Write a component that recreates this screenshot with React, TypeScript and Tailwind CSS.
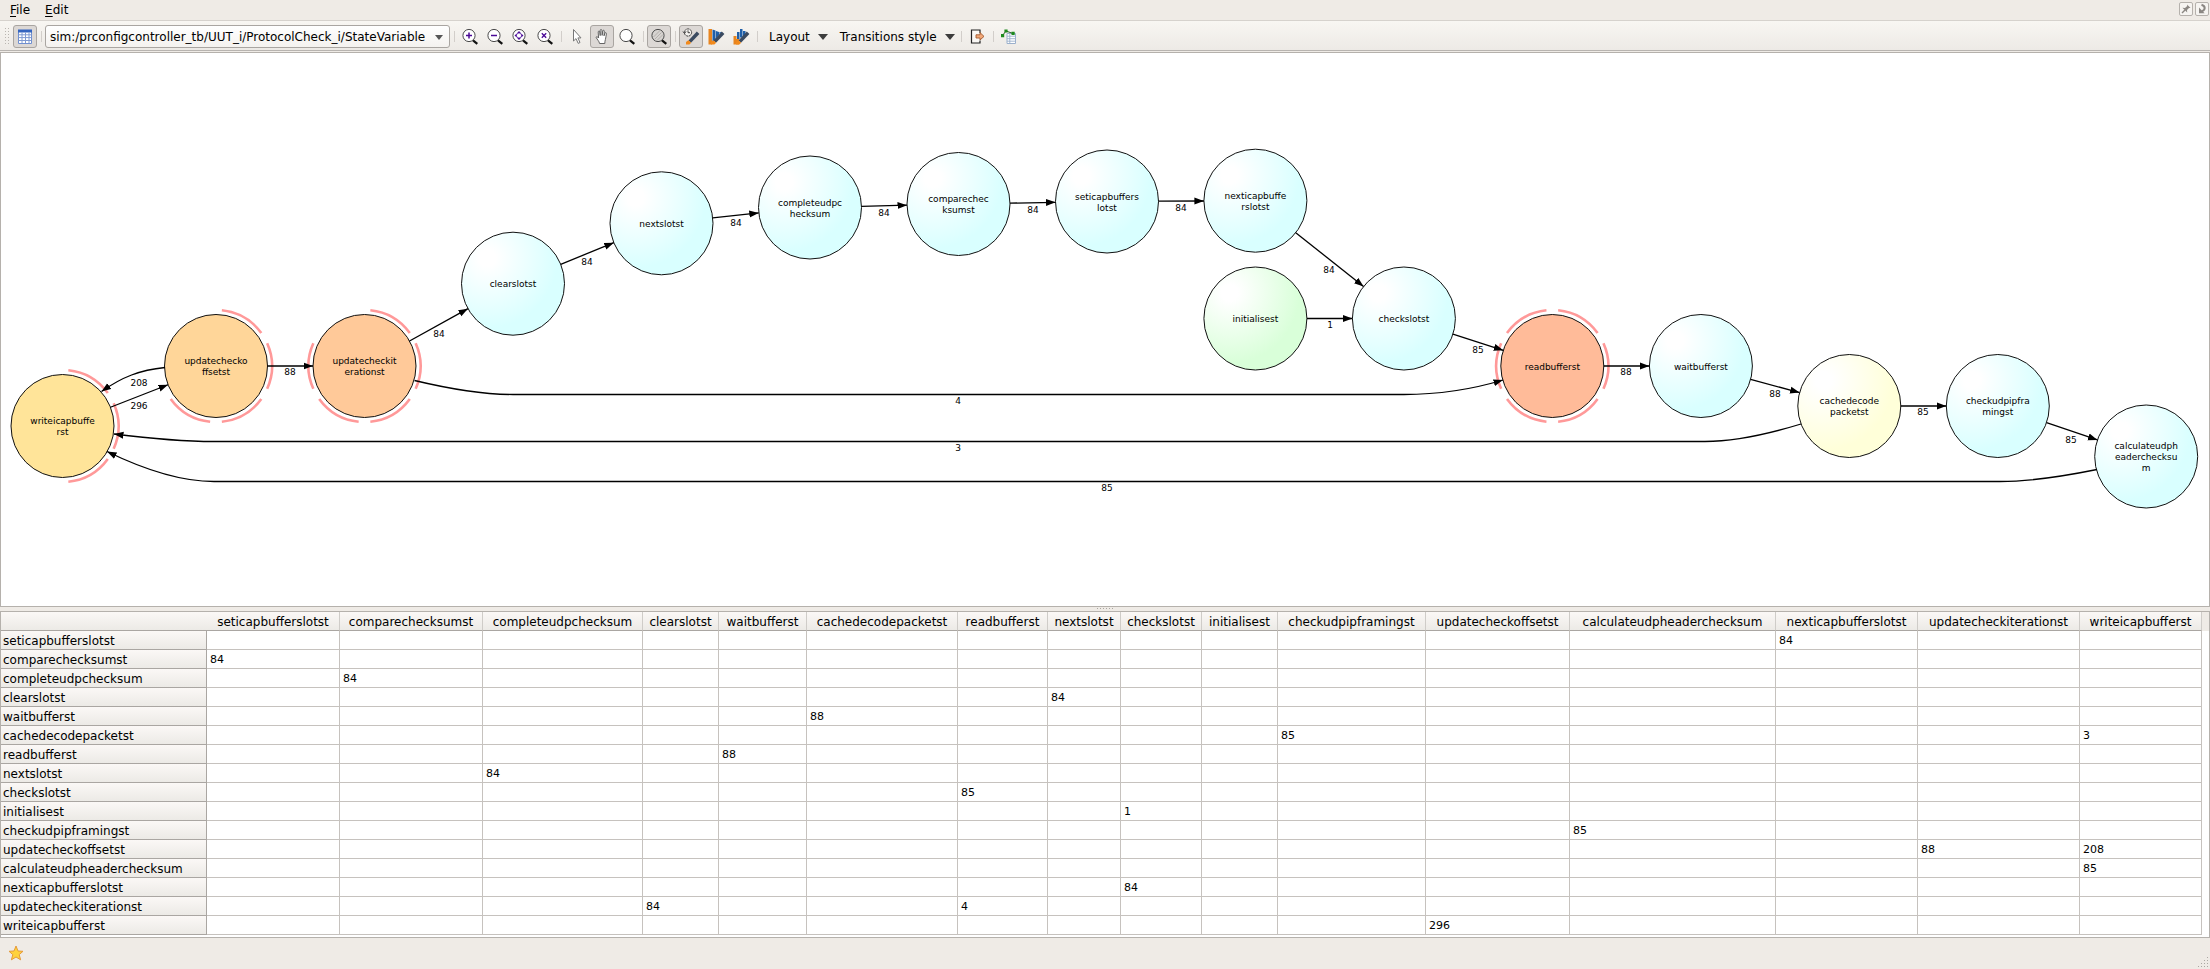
import React, { useState } from "react";

type StateNode = {
  id: string;
  x: number;
  y: number;
  lines: string[];
  fill: string;
  arcs?: number[];
};

const RADIUS = 51.5;
const CYAN = "url(#cyan)";

const NODES: StateNode[] = [
  { id: "write", x: 62.5, y: 426, lines: ["writeicapbuffe", "rst"], fill: "#ffe499", arcs: [0, 1, 2] },
  { id: "offset", x: 216, y: 366, lines: ["updatechecko", "ffsetst"], fill: "#ffd699", arcs: [0, 1, 2, 3] },
  { id: "iteration", x: 364.5, y: 366, lines: ["updatecheckit", "erationst"], fill: "#ffc999", arcs: [0, 1, 2, 3, 4] },
  { id: "clear", x: 513, y: 283.7, lines: ["clearslotst"], fill: CYAN },
  { id: "next", x: 661.5, y: 223.3, lines: ["nextslotst"], fill: CYAN },
  { id: "complete", x: 810, y: 207.5, lines: ["completeudpc", "hecksum"], fill: CYAN },
  { id: "compare", x: 958.5, y: 204, lines: ["comparechec", "ksumst"], fill: CYAN },
  { id: "seticap", x: 1107, y: 201.5, lines: ["seticapbuffers", "lotst"], fill: CYAN },
  { id: "nexticap", x: 1255.4, y: 200.7, lines: ["nexticapbuffe", "rslotst"], fill: CYAN },
  { id: "initialise", x: 1255.4, y: 318.5, lines: ["initialisest"], fill: "url(#green)" },
  { id: "check", x: 1403.9, y: 318.5, lines: ["checkslotst"], fill: CYAN },
  { id: "read", x: 1552.3, y: 366, lines: ["readbufferst"], fill: "#ffbb99", arcs: [0, 1, 2, 3, 4, 5] },
  { id: "wait", x: 1700.9, y: 366, lines: ["waitbufferst"], fill: CYAN },
  { id: "cached", x: 1849.3, y: 406, lines: ["cachedecode", "packetst"], fill: "url(#yellow)" },
  { id: "checkudp", x: 1997.8, y: 406, lines: ["checkudpipfra", "mingst"], fill: CYAN },
  { id: "calculate", x: 2146.2, y: 456.5, lines: ["calculateudph", "eaderchecksu", "m"], fill: CYAN },
];

const STRAIGHT: [string, string][] = [
  ["write", "offset"],
  ["offset", "iteration"],
  ["iteration", "clear"],
  ["clear", "next"],
  ["next", "complete"],
  ["complete", "compare"],
  ["compare", "seticap"],
  ["seticap", "nexticap"],
  ["nexticap", "check"],
  ["initialise", "check"],
  ["check", "read"],
  ["read", "wait"],
  ["wait", "cached"],
  ["cached", "checkudp"],
  ["checkudp", "calculate"],
];

const CURVES = [
  "M165 367.5 C140 370 122 377 101.5 391.5",
  "M414.5 380.5 C450 389 485 394.5 513 394.5 H1404 C1435 394.5 1470 390 1503 380",
  "M1801 424 C1765 435 1735 441.5 1705 441.5 H214 C180 441.5 150 438.5 114 434",
  "M2097 469.5 C2060 477 2030 481.5 2000 481.5 H214 C180 481.5 145 470 107 451.5",
];

const EDGE_LABELS: [number, number, string][] = [
  [139, 383, "208"],
  [139, 406, "296"],
  [290, 372, "88"],
  [439, 334, "84"],
  [587, 262, "84"],
  [736, 223, "84"],
  [884, 213, "84"],
  [1033, 210, "84"],
  [1181, 208, "84"],
  [1329, 270, "84"],
  [1330, 325, "1"],
  [1478, 350, "85"],
  [1626, 372, "88"],
  [1775, 394, "88"],
  [1923, 412, "85"],
  [2071, 440, "85"],
  [958, 401, "4"],
  [958, 448, "3"],
  [1107, 488, "85"],
];

const COLUMNS = [
  { name: "seticapbufferslotst", width: "w-[133px]" },
  { name: "comparechecksumst", width: "w-[143px]" },
  { name: "completeudpchecksum", width: "w-[160px]" },
  { name: "clearslotst", width: "w-[76px]" },
  { name: "waitbufferst", width: "w-[88px]" },
  { name: "cachedecodepacketst", width: "w-[151px]" },
  { name: "readbufferst", width: "w-[90px]" },
  { name: "nextslotst", width: "w-[73px]" },
  { name: "checkslotst", width: "w-[81px]" },
  { name: "initialisest", width: "w-[76px]" },
  { name: "checkudpipframingst", width: "w-[148px]" },
  { name: "updatecheckoffsetst", width: "w-[144px]" },
  { name: "calculateudpheaderchecksum", width: "w-[206px]" },
  { name: "nexticapbufferslotst", width: "w-[142px]" },
  { name: "updatecheckiterationst", width: "w-[162px]" },
  { name: "writeicapbufferst", width: "w-[122px]" },
];

const COUNTS: Record<string, Record<string, number>> = {
  seticapbufferslotst: { nexticapbufferslotst: 84 },
  comparechecksumst: { seticapbufferslotst: 84 },
  completeudpchecksum: { comparechecksumst: 84 },
  clearslotst: { nextslotst: 84 },
  waitbufferst: { cachedecodepacketst: 88 },
  cachedecodepacketst: { checkudpipframingst: 85, writeicapbufferst: 3 },
  readbufferst: { waitbufferst: 88 },
  nextslotst: { completeudpchecksum: 84 },
  checkslotst: { readbufferst: 85 },
  initialisest: { checkslotst: 1 },
  checkudpipframingst: { calculateudpheaderchecksum: 85 },
  updatecheckoffsetst: { updatecheckiterationst: 88, writeicapbufferst: 208 },
  calculateudpheaderchecksum: { writeicapbufferst: 85 },
  nexticapbufferslotst: { checkslotst: 84 },
  updatecheckiterationst: { clearslotst: 84, readbufferst: 4 },
  writeicapbufferst: { updatecheckoffsetst: 296 },
};

/* Arc of a 60 degree wedge, 6 degrees short at each end, clockwise from the top. */
function arcPath(x: number, y: number, wedge: number) {
  const r = 56;
  const a = ((wedge * 60 + 6) * Math.PI) / 180;
  const b = ((wedge * 60 + 54) * Math.PI) / 180;
  return `M${x + r * Math.sin(a)} ${y - r * Math.cos(a)} A${r} ${r} 0 0 1 ${x + r * Math.sin(b)} ${y - r * Math.cos(b)}`;
}

function straightPath(fromId: string, toId: string) {
  const a = NODES.find((n) => n.id === fromId)!;
  const b = NODES.find((n) => n.id === toId)!;
  const d = Math.hypot(b.x - a.x, b.y - a.y);
  const ux = ((b.x - a.x) / d) * RADIUS;
  const uy = ((b.y - a.y) / d) * RADIUS;
  return `M${a.x + ux} ${a.y + uy} L${b.x - ux} ${b.y - uy}`;
}

function Gradient({ id, color }: { id: string; color: string }) {
  return (
    <radialGradient id={id} cx="0.25" cy="0.25" r="0.68">
      <stop offset="0" stopColor="#ffffff" />
      <stop offset="0.12" stopColor="#ffffff" />
      <stop offset="1" stopColor={color} />
    </radialGradient>
  );
}

function Diagram() {
  const edges = [...STRAIGHT.map(([a, b]) => straightPath(a, b)), ...CURVES];
  return (
    <svg className="block h-full w-full font-['DejaVu_Sans',sans-serif] text-[9px]" role="img" aria-label="State diagram">
      <defs>
        <Gradient id="cyan" color="#d9ffff" />
        <Gradient id="green" color="#d9ffd9" />
        <Gradient id="yellow" color="#ffffd9" />
        <marker id="arrow" markerUnits="userSpaceOnUse" markerWidth="10" markerHeight="8" refX="9.5" refY="4" orient="auto">
          <path d="M0 0.5 L9.5 4 L0 7.5 Z" fill="#000" />
        </marker>
      </defs>
      <g transform="translate(-1 -53)">
        {NODES.map((n) => (
          <g key={n.id}>
            {n.arcs?.map((w) => (
              <path key={w} d={arcPath(n.x, n.y, w)} fill="none" stroke="#ff9999" strokeWidth="2.6" />
            ))}
            <circle cx={n.x} cy={n.y} r={RADIUS} fill={n.fill} stroke="#111" strokeWidth="1" />
            {n.lines.map((line, i) => (
              <text key={i} x={n.x} y={Math.round(n.y + 3.5 + (i - (n.lines.length - 1) / 2) * 11)} textAnchor="middle">
                {line}
              </text>
            ))}
          </g>
        ))}
        {edges.map((d) => (
          <path key={d} d={d} fill="none" stroke="#000" strokeWidth="1.3" markerEnd="url(#arrow)" />
        ))}
        {EDGE_LABELS.map(([x, y, text]) => (
          <text key={`${x}-${y}`} x={x} y={y + 3} textAnchor="middle">
            {text}
          </text>
        ))}
      </g>
    </svg>
  );
}

function ToolButton({ label, pressed, children }: { label: string; pressed?: boolean; children: React.ReactNode }) {
  return (
    <button
      type="button"
      aria-label={label}
      aria-pressed={pressed}
      className={
        pressed
          ? "h-[23px] w-6 shrink-0 rounded-[3px] border border-[#a9a5a1] bg-[#dcd8d5]"
          : "h-[23px] w-6 shrink-0 rounded-[3px] border border-transparent"
      }
    >
      <svg viewBox="1 1 22 21" className="block h-full w-full" fill="none">
        {children}
      </svg>
    </button>
  );
}

function Divider() {
  return <div className="mr-[3px] ml-1 h-[11px] w-px shrink-0 bg-[#d2ceca]" />;
}

function Lens({ children, fill = "#ffffff" }: { children?: React.ReactNode; fill?: string }) {
  return (
    <>
      <path d="M15 15.3 L19.3 18.8" stroke="#111" strokeWidth="2.2" />
      <circle cx="11" cy="10.5" r="6.1" fill={fill} stroke="#4a4a4a" strokeWidth="1" />
      {children}
    </>
  );
}

function Pencil() {
  return (
    <>
      <path d="M9.5 15.5 L17.8 6.6 L20.4 9 L12 17.8 Z" fill="#3a4a60" />
      <path d="M9.3 15.2 L12.2 17.8 L10.4 19.6 H7 V17 Z" fill="#f28a1c" />
    </>
  );
}

function MenuTrigger({ children }: { children: React.ReactNode }) {
  return (
    <button type="button" className="flex h-[23px] shrink-0 items-center gap-2 whitespace-nowrap">
      {children}
      <svg viewBox="0 0 10 6" className="h-[6px] w-[10px]">
        <path d="M0 0 H10 L5 6 Z" fill="#3d3d3d" />
      </svg>
    </button>
  );
}

function Toolbar() {
  const [path, setPath] = useState("sim:/prconfigcontroller_tb/UUT_i/ProtocolCheck_i/StateVariable");
  return (
    <div className="flex h-[30px] shrink-0 items-center border-b border-[#b8b4b0] bg-linear-to-b from-[#f8f6f2] to-[#edeae6] pt-[2px] pl-1">
      <svg viewBox="0 0 6 17" className="mr-[3px] h-[17px] w-[6px] shrink-0">
        {[0, 1, 2, 3, 4, 5].map((i) => (
          <path key={i} d={`M1 ${i * 3} h1 v1 h-1 Z M4 ${i * 3} h1 v1 h-1 Z`} fill="#b9b5b0" />
        ))}
      </svg>
      <ToolButton label="Show table" pressed>
        <path d="M5.5 5.5 H18.5 V18.5 H5.5 Z" fill="#ffffff" stroke="#6f8fd0" />
        <path d="M5 4.5 H19 V7.5 H5 Z" fill="#3465c0" />
        <path d="M5.5 9.8 H18.5 M5.5 12.6 H18.5 M5.5 15.5 H18.5 M9 7.5 V18 M12.5 7.5 V18 M16 7.5 V18" stroke="#7f9ad2" />
      </ToolButton>
      <Divider />
      <div className="relative shrink-0">
        <select
          aria-label="State variable"
          value={path}
          onChange={(e) => setPath(e.target.value)}
          className="block h-[23px] w-[405px] appearance-none rounded-[3px] border border-[#a9a5a1] bg-linear-to-b from-white to-[#f4f2ef] pr-6 pl-1 text-[12px] text-black"
        >
          <option>{path}</option>
        </select>
        <svg viewBox="0 0 8 5" className="pointer-events-none absolute top-[10px] right-[7px] h-[5px] w-[8px]">
          <path d="M0 0 H8 L4 5 Z" fill="#555" />
        </svg>
      </div>
      <Divider />
      <div className="flex gap-px">
        <ToolButton label="Zoom in">
          <Lens>
            <path d="M8 10.5 H14 M11 7.5 V13.5" stroke="#4b0a96" strokeWidth="1.5" />
          </Lens>
        </ToolButton>
        <ToolButton label="Zoom out">
          <Lens>
            <path d="M8 10.5 H14" stroke="#4b0a96" strokeWidth="1.5" />
          </Lens>
        </ToolButton>
        <ToolButton label="Zoom to fit">
          <Lens>
            <circle cx="11" cy="10.5" r="2.6" stroke="#6a35b0" strokeWidth="1" />
            <path d="M11 6 L12.8 8 H9.2 Z M11 15 L12.8 13 H9.2 Z M6.5 10.5 L8.5 8.7 V12.3 Z M15.5 10.5 L13.5 8.7 V12.3 Z" fill="#4b0a96" />
          </Lens>
        </ToolButton>
        <ToolButton label="Reset zoom">
          <Lens>
            <path d="M8.8 8.2 L13.2 12.8 M13.2 8.2 L8.8 12.8" stroke="#4b0a96" strokeWidth="1.3" />
          </Lens>
        </ToolButton>
      </div>
      <Divider />
      <div className="flex gap-px">
        <ToolButton label="Select">
          <path d="M8.5 4.5 V16 L11 13.6 L13.2 18.4 L15 17.5 L12.9 12.9 H16 Z" fill="#fff" stroke="#777" strokeWidth="1" />
        </ToolButton>
        <ToolButton label="Pan" pressed>
          <path
            d="M9.6 18.5 C9 16 7.2 14.5 6.2 12.6 C6 11.4 7.3 11.4 8.6 13 L8.2 7 C8.2 5.8 9.7 5.8 9.8 7 L10.2 10.6 V5.4 C10.2 4.2 11.8 4.2 11.9 5.4 L12.1 10.4 L12.8 6 C13 4.9 14.4 5.1 14.3 6.2 L14 10.8 L15 8.2 C15.5 7.1 16.7 7.6 16.4 8.7 C15.9 11 16 12.5 15.4 14.5 C15 16 14.8 17 14.8 18.5 Z"
            fill="#fff"
            stroke="#555"
            strokeWidth="0.9"
          />
        </ToolButton>
        <ToolButton label="Zoom tool">
          <Lens />
        </ToolButton>
      </div>
      <Divider />
      <ToolButton label="Zoom area" pressed>
        <Lens fill="#d6d3d0">
          <path d="M6.5 12 L12.5 6 M8 14 L14.5 7.5 M10 15.5 L16 9.5" stroke="#aaa6a2" strokeWidth="0.8" />
        </Lens>
      </ToolButton>
      <Divider />
      <div className="flex gap-px">
        <ToolButton label="Highlight by time" pressed>
          <circle cx="9" cy="7.5" r="3.6" fill="#f4f2ef" stroke="#333" strokeWidth="1" strokeDasharray="2 0.6" />
          <path d="M9 5.3 V7.7 H11 M4 6.5 L5.6 8.6 L7 6.3" stroke="#333" strokeWidth="0.9" />
          <Pencil />
        </ToolButton>
        <ToolButton label="Highlight by count">
          <path d="M4.5 4 H8 V19.5 H4.5 Z" fill="#e8851f" />
          <path d="M8.5 4.5 L11.5 5.5 V15 L8.5 18 Z M12 6 L15 7 V10 L12 13.5 Z M15.5 7 L18 7.5 L15.5 9 Z" fill="#1f5fa8" />
          <Pencil />
        </ToolButton>
        <ToolButton label="Highlight by duration">
          <path d="M4.5 11 H7.5 V19.5 H4.5 Z M7.5 14 H10 V19.5 H7.5 Z" fill="#e8851f" />
          <path d="M8 7 H10.5 V14 H8 Z M11 4 H13.5 V12.5 H11 Z M14 6 H16.5 V9.5 L14 12 Z" fill="#1f5fa8" />
          <Pencil />
        </ToolButton>
      </div>
      <Divider />
      <div className="flex gap-3 pr-[2px] pl-2 text-[12px]">
        <MenuTrigger>Layout</MenuTrigger>
        <MenuTrigger>Transitions style</MenuTrigger>
      </div>
      <Divider />
      <ToolButton label="Export">
        <path d="M15 8 V5 H6.5 V18 H15 V15.5" fill="#faf8f5" stroke="#222" strokeWidth="1.2" />
        <path d="M11 9.8 H15 V7.6 L19 11.4 L15 15 V13 H11 Z" fill="#f2a878" stroke="#a05a30" strokeWidth="0.9" />
      </ToolButton>
      <Divider />
      <ToolButton label="Tree view">
        <path d="M10 8.5 H18.5 V18.5 H10 Z" fill="#fff" stroke="#9bb0cc" />
        <path d="M10 11.2 H18.5 M10 13.7 H18.5 M10 16.2 H18.5 M12.8 8.5 V18.5" stroke="#9bb0cc" strokeWidth="0.9" />
        <path d="M5.5 10.5 L9 6 L16 8.5" stroke="#2a5a2a" strokeWidth="1" />
        <path d="M4 9 H7.2 V12.2 H4 Z M7.4 4.4 H10.6 V7.6 H7.4 Z M14.5 6.8 H17.7 V10 H14.5 Z" fill="#1e8a1e" />
      </ToolButton>
    </div>
  );
}

function MenuBar() {
  return (
    <div className="flex h-[21px] shrink-0 items-center justify-between border-b border-[#d6d2cd] pr-px pl-[10px] text-[12px]">
      <nav className="flex gap-[15px]">
        <button type="button">
          <span className="underline underline-offset-2">F</span>ile
        </button>
        <button type="button">
          <span className="underline underline-offset-2">E</span>dit
        </button>
      </nav>
      <div className="flex gap-[2px] self-start pt-[2px]">
        <button type="button" aria-label="Pin" className="h-[14px] w-[14px] rounded-[2px] border border-[#b5b1ac] bg-[#f6f4f1]">
          <svg viewBox="0 0 12 12" className="block h-full w-full">
            <path d="M2 10 L5 7" stroke="#8b8783" strokeWidth="1.4" />
            <path d="M2.4 4.8 L5 4.9 L7.2 3 L7 1.4 L10.6 5 L9 4.9 L7 7 L7.2 9.6 Z" fill="#8b8783" />
          </svg>
        </button>
        <button type="button" aria-label="Dock" className="h-[14px] w-[14px] rounded-[2px] border border-[#b5b1ac] bg-[#f6f4f1]">
          <svg viewBox="0 0 12 12" className="block h-full w-full">
            <path d="M5.5 1.8 C9.5 3 9.8 6.5 6 8.3" stroke="#8b8783" strokeWidth="2" fill="none" />
            <path d="M3 4.6 V10.2 H8.6 Z" fill="#8b8783" />
          </svg>
        </button>
      </div>
    </div>
  );
}

function TransitionTable() {
  return (
    <div className="shrink-0 border border-[#b5b1ac] bg-white pb-[2px]">
      <div className="bg-[linear-gradient(#efebe6_19px,#ffffff_19px)]">
        <table className="table-fixed border-separate border-spacing-0 bg-white">
          <colgroup>
            <col className="w-[206px]" />
            {COLUMNS.map((c) => (
              <col key={c.name} className={c.width} />
            ))}
          </colgroup>
          <thead>
            <tr className="h-[19px]">
              <td className="border-b border-[#aaa6a2] bg-linear-to-b from-[#fbf8f6] to-[#eceae6] p-0" />
              {COLUMNS.map((c) => (
                <th
                  key={c.name}
                  scope="col"
                  className="border-r border-b border-r-[#cfccc8] border-b-[#aaa6a2] bg-linear-to-b from-[#fbf8f6] to-[#eceae6] p-0 pt-[2px] text-center text-[12px] leading-[16px] font-normal"
                >
                  {c.name}
                </th>
              ))}
            </tr>
          </thead>
          <tbody>
            {COLUMNS.map((row) => (
              <tr key={row.name} className="h-[19px]">
                <th
                  scope="row"
                  className="border-r border-b border-[#aaa6a2] bg-linear-to-b from-[#fbf8f6] to-[#eceae6] p-0 pt-[2px] pl-[2px] text-left text-[12px] leading-[16px] font-normal"
                >
                  {row.name}
                </th>
                {COLUMNS.map((col) => (
                  <td key={col.name} className="border-r border-b border-[#c6c2be] p-0 pt-[2px] pl-[3px] text-[11px] leading-[16px]">
                    {COUNTS[row.name][col.name]}
                  </td>
                ))}
              </tr>
            ))}
          </tbody>
        </table>
      </div>
    </div>
  );
}

function StatusBar() {
  return (
    <div className="flex h-[31px] shrink-0 items-center justify-between pl-2">
      <svg viewBox="0 0 16 16" className="mb-[2px] h-4 w-4">
        <path
          d="M8 1 L10 6 L15 6.3 L11.2 9.6 L12.6 14.8 L8 12 L3.4 14.8 L4.8 9.6 L1 6.3 L6 6 Z"
          fill="#ffd23c"
          stroke="#e59a3a"
          strokeWidth="1"
        />
      </svg>
      <svg viewBox="0 0 12 12" className="mr-px h-3 w-3 self-end">
        {[0, 1, 2, 3].map((r) =>
          [0, 1, 2, 3].slice(3 - r).map((c) => (
            <path key={`${r}${c}`} d={`M${c * 3 + 1} ${r * 3} h1 v1 h-1 Z`} fill="#aba7a2" />
          )),
        )}
      </svg>
    </div>
  );
}

export default function App() {
  return (
    <div className="flex h-screen flex-col overflow-hidden bg-[#efebe6] font-['DejaVu_Sans',sans-serif] text-black">
      <MenuBar />
      <Toolbar />
      <main className="flex min-h-0 flex-1 flex-col pt-px">
        <div className="min-h-0 flex-1 overflow-hidden border border-[#b5b1ac] bg-white">
          <Diagram />
        </div>
        <div className="flex h-1 shrink-0 items-center justify-center">
          <svg viewBox="0 0 17 2" className="h-[2px] w-[17px]">
            {[0, 1, 2, 3, 4, 5].map((i) => (
              <path key={i} d={`M${i * 3} 0 h1 v1 h-1 Z`} fill="#aba7a2" />
            ))}
          </svg>
        </div>
        <TransitionTable />
      </main>
      <StatusBar />
    </div>
  );
}
